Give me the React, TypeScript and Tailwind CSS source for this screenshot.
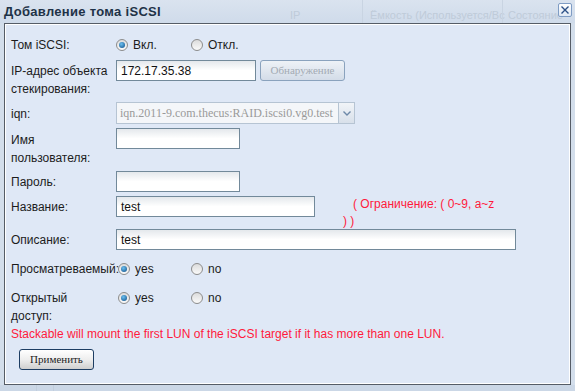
import { type ReactNode } from 'react'

const FONT = { fontFamily: '"Liberation Sans", Arial, sans-serif' }
const SERIF = { fontFamily: '"Liberation Serif", "Times New Roman", serif' }

function Radio({ checked, label }: { checked?: boolean; label: string }) {
  return (
    <span className="flex items-center gap-[5px]">
      <span className="flex h-[12px] w-[12px] items-center justify-center rounded-full border border-[#8c8c8c] bg-gradient-to-b from-[#dcdcdc] to-[#fafafa]">
        {checked && (
          <span className="h-[6px] w-[6px] rounded-full bg-[radial-gradient(circle_at_40%_35%,#6cc0f0,#0b4a85)]" />
        )}
      </span>
      <span>{label}</span>
    </span>
  )
}

function TextInput({ width, value }: { width: number; value?: string }) {
  return (
    <div
      className="flex h-[21px] items-center border border-[#72899a] bg-gradient-to-b from-[#e4e8ec] via-[#ffffff] to-[#ffffff] px-[4px] text-[12px] text-[#111]"
      style={{ width }}
    >
      {value}
    </div>
  )
}

function Row({ label, height, children }: { label: ReactNode; height: number; children: ReactNode }) {
  return (
    <div className="flex items-start" style={{ height }}>
      <div className="w-[105px] shrink-0 whitespace-nowrap pt-[2px] leading-[18px]">{label}</div>
      {children}
    </div>
  )
}

export default function App() {
  return (
    <div className="relative h-[391px] w-[575px] overflow-hidden bg-[#d3deeb] text-[12px] text-[#1c1c1c]" style={FONT}>
      {/* title bar, with the grid header of the page behind showing through */}
      <div className="relative flex h-[23px] items-center bg-gradient-to-b from-[#dae3ef] to-[#cfdbea] px-[4px]">
        <div className="pointer-events-none absolute inset-0 text-[11px] leading-[13px] text-[#bfcbd9]">
          <span className="absolute left-[290px] top-[9px]">IP</span>
          <span className="absolute left-[362px] top-0 h-[23px] border-l border-[#c9d4e2]" />
          <span className="absolute left-[370px] top-[9px] whitespace-nowrap">Ёмкость (Используется/Вс</span>
          <span className="absolute left-[502px] top-0 h-[23px] border-l border-[#c9d4e2]" />
          <span className="absolute left-[508px] top-[9px] whitespace-nowrap">Состояние</span>
        </div>
        <span className="relative text-[13px] font-bold tracking-[0.3px] text-[#1e3247]">Добавление тома iSCSI</span>
        <div className="absolute left-[558px] top-[3px] flex h-[14px] w-[14px] items-center justify-center rounded-[2px] border border-[#7f9cc4] bg-gradient-to-b from-[#ffffff] to-[#dfe8f4]">
          <svg width="10" height="10" viewBox="0 0 10 10">
            <path d="M1.5 1.5 L8.5 8.5 M8.5 1.5 L1.5 8.5" stroke="#2b4f86" strokeWidth="1.4" />
          </svg>
        </div>
      </div>

      {/* dialog body */}
      <div className="ml-[4px] h-[362px] w-[567px] border border-[#555c66] bg-[#dfe8f6] pl-[6px] pt-[10px] shadow-[inset_1px_1px_0_#ffffff,inset_-1px_-1px_0_#ffffff]">
        <Row label="Том iSCSI:" height={26}>
          <div className="flex items-center pt-[2px] leading-[18px]">
            <div className="w-[75px]">
              <Radio checked label="Вкл." />
            </div>
            <Radio label="Откл." />
          </div>
        </Row>

        <Row
          label={
            <>
              IP-адрес объекта
              <br />
              стекирования:
            </>
          }
          height={42}
        >
          <div className="flex items-start gap-[4px]">
            <TextInput width={140} value="172.17.35.38" />
            <div
              className="flex h-[21px] w-[85px] items-center justify-center rounded-[3px] border border-[#8aa2bd] bg-gradient-to-b from-[#eef2f7] to-[#d3dce8] text-[11px] text-[#a3abb4]"
              style={SERIF}
            >
              Обнаружение
            </div>
          </div>
        </Row>

        <Row label={<span className="inline-block pt-[1px]">iqn:</span>} height={26}>
          <div className="flex h-[22px]">
            <div
              className="flex w-[223px] items-center overflow-hidden whitespace-nowrap border border-[#b6c4d3] bg-[#f4f6f9] px-[3px] text-[12px] text-[#9a9a9a]"
              style={SERIF}
            >
              iqn.2011-9.com.thecus:RAID.iscsi0.vg0.test
            </div>
            <div className="flex w-[16px] items-center justify-center border border-l-0 border-[#b6c4d3] bg-gradient-to-b from-[#f1f4f8] to-[#d8e0ea]">
              <svg width="8" height="5" viewBox="0 0 8 5">
                <path d="M0.5 0.5 L4 4 L7.5 0.5" fill="none" stroke="#6d88a8" strokeWidth="1.4" />
              </svg>
            </div>
          </div>
        </Row>

        <Row
          label={
            <span className="inline-block pt-[1px]">
              Имя
              <br />
              пользователя:
            </span>
          }
          height={43}
        >
          <TextInput width={124} />
        </Row>

        <Row label="Пароль:" height={25}>
          <TextInput width={124} />
        </Row>

        <Row label="Название:" height={33}>
          <div className="flex items-start">
            <TextInput width={199} value="test" />
            <div className="ml-[28px] text-[12px] leading-[17px] text-[#ff1a3c]">
              <div className="pl-[10px]">( Ограничение: ( 0~9, a~z</div>
              <div>) )</div>
            </div>
          </div>
        </Row>

        <Row label="Описание:" height={29}>
          <TextInput width={400} value="test" />
        </Row>

        <Row label="Просматреваемый:" height={29}>
          <div className="flex items-center pt-[2px] leading-[18px]">
            <div className="w-[75px] pl-[2px]">
              <Radio checked label="yes" />
            </div>
            <Radio label="no" />
          </div>
        </Row>

        <Row
          label={
            <>
              Открытый
              <br />
              доступ:
            </>
          }
          height={37}
        >
          <div className="flex items-center pt-[2px] leading-[18px]">
            <div className="w-[75px] pl-[2px]">
              <Radio checked label="yes" />
            </div>
            <Radio label="no" />
          </div>
        </Row>

        <div className="h-[25px] pt-[1px] leading-[18px] text-[#ff1a3c]">
          Stackable will mount the first LUN of the iSCSI target if it has more than one LUN.
        </div>

        <div className="pl-[8px]">
          <div
            className="flex h-[21px] w-[75px] items-center justify-center rounded-[3px] border border-[#1d3d63] bg-gradient-to-b from-[#ffffff] via-[#eeeeee] to-[#cfcfcf] text-[11px] text-[#222]"
            style={SERIF}
          >
            Применить
          </div>
        </div>
      </div>

      {/* bottom strip of the window behind */}
      <div className="flex h-[6px] bg-[#cbd7e6]">
        <span className="ml-[36px] h-full border-l border-[#c2cedd]" />
        <span className="ml-[16px] h-full border-l border-[#c2cedd]" />
      </div>
    </div>
  )
}
